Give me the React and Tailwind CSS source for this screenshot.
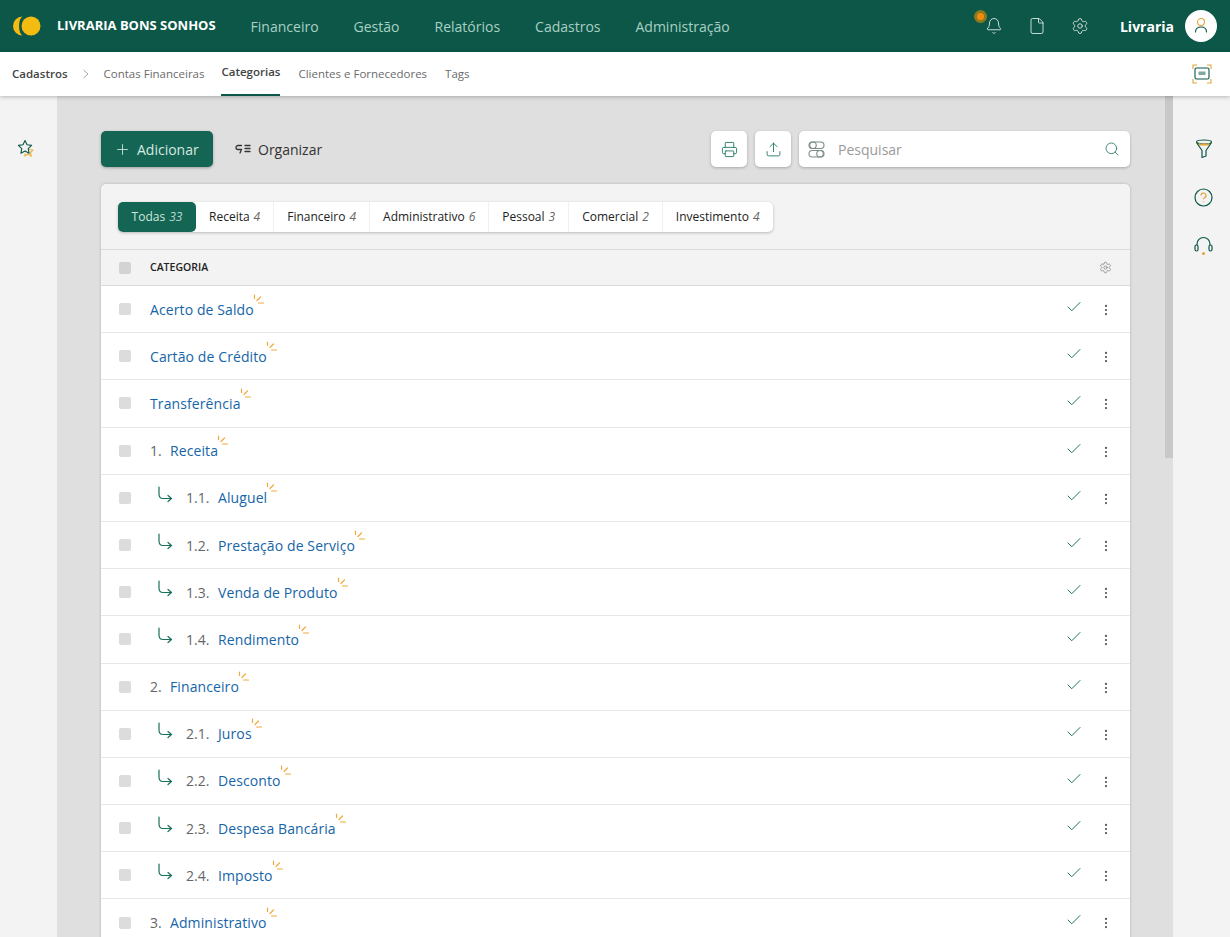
import React from "react";
import { Bell, File, Settings, Plus, Printer, Upload, Search, Check, EllipsisVertical, CornerDownRight } from "lucide-react";

const nav = ["Financeiro", "Gestão", "Relatórios", "Cadastros", "Administração"];
const tabs = [["Receita", "4"], ["Financeiro", "4"], ["Administrativo", "6"], ["Pessoal", "3"], ["Comercial", "2"], ["Investimento", "4"]];
const rows = [
  { t: "Acerto de Saldo" }, { t: "Cartão de Crédito" }, { t: "Transferência" },
  { n: "1.", t: "Receita" },
  { n: "1.1.", t: "Aluguel", s: 1 }, { n: "1.2.", t: "Prestação de Serviço", s: 1 }, { n: "1.3.", t: "Venda de Produto", s: 1 }, { n: "1.4.", t: "Rendimento", s: 1 },
  { n: "2.", t: "Financeiro" },
  { n: "2.1.", t: "Juros", s: 1 }, { n: "2.2.", t: "Desconto", s: 1 }, { n: "2.3.", t: "Despesa Bancária", s: 1 }, { n: "2.4.", t: "Imposto", s: 1 },
  { n: "3.", t: "Administrativo" },
];

function Spark() {
  return (
    <svg className="absolute left-full top-[-5px] ml-[-1px]" width="12" height="12" viewBox="0 0 12 12" fill="none" stroke="#f0a93c" strokeWidth="1.2" strokeLinecap="round">
      <path d="M1.5 1v3.5M4 6.5 7.5 3M5.5 9h5" />
    </svg>
  );
}

function Row({ r }) {
  return (
    <div className="h-[47.2px] flex items-center border-b border-[#e6e6e6] bg-white relative">
      <span className="w-3 h-3 ml-[18px] rounded-[2px] bg-[#dcdcdc] shrink-0" />
      {r.s ? (
        <span className="ml-[26px] w-[29px] shrink-0 flex">
          <svg width="16" height="18" viewBox="0 0 16 18" fill="none" stroke="#17705c" strokeWidth="1.2" strokeLinecap="round" strokeLinejoin="round" className="mt-[-6px]">
            <path d="M2 1v7c0 3 2 4.500 4 4.500h8.500M11 9.500l3.500 3-3.500 3" />
          </svg>
        </span>
      ) : (
        <span className="w-[19px] shrink-0" />
      )}
      {r.n && <span className={`text-[14px] text-[#666] ${r.s ? "w-[32px]" : "w-[20px]"} shrink-0`}>{r.n}</span>}
      <span className="relative text-[14px] text-[#1565a8] tracking-[0.1px]">{r.t}<Spark /></span>
      <Check size={18} strokeWidth={1.3} className="absolute left-[964px] top-[12px] text-[#17705c]" />
      <EllipsisVertical size={14} strokeWidth={1.8} className="absolute left-[998px] top-[17px] text-[#555]" />
    </div>
  );
}

export default function App() {
  return (
    <div className="w-[1230px] h-[937px] overflow-hidden flex flex-col bg-[#dfdfdf] font-['Open_Sans',sans-serif]">
      <header className="h-[52px] shrink-0 bg-[#0c5748] flex items-center">
        <svg className="ml-[13px]" width="28" height="20" viewBox="0 0 28 20">
          <path d="M9.500 0.500A9.500 9.500 0 0 0 9.500 19.500A12 12 0 0 1 9.500 0.500Z" fill="#f4bb11" transform="translate(0 0)" />
          <path d="M8 1A9.500 9.500 0 0 0 8 19C5.500 14 5.500 6 8 1Z" fill="#f4bb11" />
          <circle cx="18" cy="10" r="9.500" fill="#f4bb11" />
        </svg>
        <span className="ml-[16px] text-[13px] font-bold text-white whitespace-nowrap">LIVRARIA BONS SONHOS</span>
        <nav className="ml-[35px] flex gap-[35px] text-[14px] text-[#a9d0c4]">
          {nav.map((n) => <span key={n}>{n}</span>)}
        </nav>
        <div className="ml-auto flex items-center">
          <span className="relative mr-[25px]">
            <Bell size={18} strokeWidth={1.2} className="text-[#dce9e5]" />
            <span className="absolute left-[-11px] top-[-7px] w-[13px] h-[13px] rounded-full bg-[#8d7a1d] flex items-center justify-center">
              <span className="w-[7px] h-[7px] rounded-full bg-[#f28c0f]" />
            </span>
          </span>
          <File size={18} strokeWidth={1.2} className="text-[#dce9e5] mr-[25px]" />
          <Settings size={18} strokeWidth={1.2} className="text-[#dce9e5] mr-[31px]" />
          <span className="text-[14px] font-bold text-white mr-[11px]">Livraria</span>
          <span className="w-8 h-8 rounded-full bg-white mr-[13px] flex items-center justify-center">
            <svg width="18" height="20" viewBox="0 0 18 20" fill="none" strokeWidth="1.1" strokeLinecap="round">
              <circle cx="9" cy="6" r="3.500" stroke="#e0a53a" />
              <path d="M3.500 16c0-3.500 2.500-5 5.500-5s5.500 1.500 5.500 5" stroke="#0c5748" />
            </svg>
          </span>
        </div>
      </header>

      <div className="h-11 shrink-0 bg-white flex items-center relative z-10 shadow-[0_1px_4px_rgba(0,0,0,0.25)] text-[11.500px] text-[#6b6b6b]">
        <span className="ml-[12px] font-semibold text-[#444]">Cadastros</span>
        <svg className="ml-[14px] mr-[14px]" width="8" height="10" viewBox="0 0 8 10" fill="none" stroke="#999" strokeWidth="0.900"><path d="M1.500 1l4.500 4-4.500 4" /></svg>
        <span>Contas Financeiras</span>
        <span className="ml-[17px] h-full flex items-center pb-[3px] border-b-2 border-[#0c5748] font-semibold text-[#444]">Categorias</span>
        <span className="ml-[18px]">Clientes e Fornecedores</span>
        <span className="ml-[18px]">Tags</span>
        <svg className="absolute right-[18px] top-[12px]" width="20" height="20" viewBox="0 0 20 20" fill="none" strokeWidth="1.100">
          <path d="M1 5V1h4M15 1h4v4M19 15v4h-4M5 19H1v-4" stroke="#e0a53a" />
          <rect x="3" y="4" width="14" height="11" rx="1.500" stroke="#0c5748" />
          <rect x="6.500" y="7.500" width="7" height="3.500" fill="#7faaa0" stroke="none" />
        </svg>
      </div>

      <div className="flex-1 min-h-0 flex">
        <aside className="w-[57px] shrink-0 bg-[#f3f3f3] pt-[43px] pl-[17px]">
          <svg width="18" height="20" viewBox="0 0 18 20" fill="none" strokeWidth="1.100" strokeLinejoin="round">
            <path d="M12 10.500l4 .500-2.500 2.500.800 3.800L11 15l-3.300 2 .500-2.500" stroke="#e7b53c" />
            <path d="M8 1.500l2 4.300 4.600.600-3.400 3.200.900 4.600L8 12l-4.100 2.200.900-4.600-3.400-3.200L6 5.800z" stroke="#0c5748" />
          </svg>
        </aside>

        <main className="w-[1108px] shrink-0 pl-[44px] pr-[35px] pt-[35px]">
          <div className="flex items-center h-9">
            <button className="w-[112px] h-9 rounded-[5px] bg-[#146553] text-[#d5e8e2] text-[14px] flex items-center pl-[13px] gap-[6px] shadow-[0_1px_3px_rgba(0,0,0,0.3)]">
              <Plus size={17} strokeWidth={1.2} />Adicionar
            </button>
            <span className="ml-[22px] flex items-center gap-[6px] text-[14px] text-[#333]">
              <svg width="17" height="12" viewBox="0 0 17 12" fill="none" stroke="#333" strokeWidth="1.300" strokeLinecap="round">
                <path d="M6.500 2.500H3a2 2 0 0 0 0 4h3.500L5 10" />
                <path d="M10 2.500h5M10 5.500h5M10 8.500h5" />
              </svg>
              Organizar
            </span>
            <button className="ml-auto w-9 h-9 rounded-[5px] bg-white flex items-center justify-center shadow-[0_1px_3px_rgba(0,0,0,0.25)]">
              <Printer size={17} strokeWidth={1.200} className="text-[#17705c]" />
            </button>
            <button className="ml-[8px] w-9 h-9 rounded-[5px] bg-white flex items-center justify-center shadow-[0_1px_3px_rgba(0,0,0,0.25)]">
              <Upload size={17} strokeWidth={1.200} className="text-[#17705c]" />
            </button>
            <div className="ml-[8px] w-[331px] h-9 rounded-[5px] bg-white flex items-center shadow-[0_1px_3px_rgba(0,0,0,0.25)]">
              <svg className="ml-[9px]" width="17" height="17" viewBox="0 0 17 17" fill="none" stroke="#7c8c88" strokeWidth="1.100">
                <rect x="1" y="1" width="15" height="6.500" rx="3.250" />
                <rect x="1" y="9.500" width="15" height="6.500" rx="3.250" />
                <circle cx="5" cy="4.250" r="3.250" />
                <circle cx="12" cy="12.750" r="3.250" />
              </svg>
              <span className="ml-[13px] text-[14px] text-[#9a9a9a]">Pesquisar</span>
              <Search size={16} strokeWidth={1.200} className="ml-auto mr-[10px] text-[#17705c]" />
            </div>
          </div>

          <section className="mt-[17px] rounded-t-[5px] bg-[#f3f3f3] shadow-[0_0_3px_rgba(0,0,0,0.2)]">
            <div className="h-[66px] pt-[18px] pl-[17px] border-b border-[#d9d9d9]">
              <div className="inline-flex h-[30px] rounded-[5px] bg-white text-[12px] text-[#222] shadow-[0_1px_3px_rgba(0,0,0,0.25)]">
                <span className="w-[78px] rounded-[5px] bg-[#146553] text-[#cfe5de] flex items-center justify-center gap-[4px]">Todas <i className="text-[#b9d8cf]">33</i></span>
                {tabs.map(([a, b], i) => (
                  <span key={a} className={`px-[13px] flex items-center gap-[4px] ${i < 5 ? "border-r border-[#f0f0f0]" : ""}`}>{a} <i className="text-[#666]">{b}</i></span>
                ))}
              </div>
            </div>
            <div className="h-9 flex items-center border-b border-[#d9d9d9] relative">
              <span className="w-3 h-3 ml-[18px] rounded-[2px] bg-[#d3d3d3]" />
              <span className="ml-[19px] text-[10.500px] font-semibold text-[#222]">CATEGORIA</span>
              <Settings size={13} strokeWidth={1.100} className="absolute right-[18px] top-[11px] text-[#666]" />
            </div>
            {rows.map((r) => <Row key={r.t} r={r} />)}
          </section>
        </main>

        <div className="w-2 shrink-0 self-start h-[362px] bg-[#c8c8c8]" />

        <aside className="w-[57px] shrink-0 bg-[#f3f3f3] flex flex-col items-center pt-[43px] pl-[4px] gap-[29px]">
          <svg width="18" height="20" viewBox="0 0 18 20" fill="none" strokeWidth="1.200" strokeLinejoin="round">
            <ellipse cx="9" cy="3" rx="7.500" ry="2" stroke="#0c5748" />
            <path d="M3.500 4.700C5 6 13 6 14.500 4.700" stroke="#e0a53a" strokeWidth="1.800" />
            <path d="M1.500 3.500l5.500 8v7l4-1.500v-5.500l5.500-8" stroke="#0c5748" />
          </svg>
          <svg width="19" height="19" viewBox="0 0 19 19" fill="none" strokeWidth="1.200">
            <circle cx="9.500" cy="9.500" r="8.500" stroke="#0c5748" />
            <path d="M7 7.500a2.500 2.500 0 1 1 3.500 2.300c-.7.300-1 .800-1 1.500M9.500 13.500v.800" stroke="#e0a53a" />
          </svg>
          <svg width="19" height="20" viewBox="0 0 19 20" fill="none" strokeWidth="1.200">
            <path d="M3 9V8a6.500 6.500 0 0 1 13 0v1" stroke="#0c5748" />
            <rect x="1" y="9" width="3" height="6" rx="1.500" stroke="#0c5748" />
            <rect x="15" y="9" width="3" height="6" rx="1.500" stroke="#0c5748" />
            <circle cx="9.500" cy="17.500" r="1.500" fill="#e0a53a" stroke="none" />
          </svg>
        </aside>
      </div>
    </div>
  );
}
